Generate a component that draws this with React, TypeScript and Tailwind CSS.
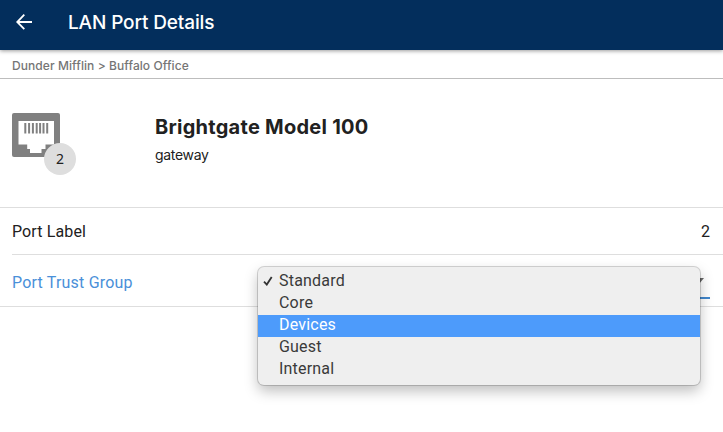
const options = ["Standard", "Core", "Devices", "Guest", "Internal"];

function BackArrow() {
  return (
    <svg className="h-4 w-4" viewBox="0 0 16 16" fill="none" stroke="#fff" strokeWidth="1.8">
      <path d="M8.3 0.7 1.2 8l7.1 7.2M1.2 8H16" />
    </svg>
  );
}

function PortIcon() {
  return (
    <svg className="h-11 w-12" viewBox="0 0 48 44">
      <rect width="48" height="44" rx="2" fill="#808080" />
      <path d="M6.5 8H42v23.5h-8.500v4.500h-4v4H18v-4h-2.800v-4.500H6.500z" fill="#fff" />
      <path
        d="M13.300 10v10.500M17.100 10v10.500M20.900 10v10.500M24.700 10v10.500M28.100 10v10.500M31.500 10v10.500M35.200 10v10.500"
        stroke="#808080"
        strokeWidth="2"
      />
    </svg>
  );
}

function TrustGroupMenu() {
  return (
    <ul className="absolute top-[12px] left-[258px] w-[442px] rounded-[6px] bg-[#efefef] py-1 font-[Roboto,sans-serif] text-[16px] leading-[22px] tracking-[0.2px] text-[#3a3a3a] shadow-[0_0_0_1px_rgba(0,0,0,0.16),0_6px_14px_rgba(0,0,0,0.26)]">
      {options.map((name, i) => (
        <li
          key={name}
          className={`flex h-[22px] items-center pl-[5px] ${name === "Devices" ? "bg-[#4d9bfb] text-white" : ""}`}
        >
          <span className="w-4">
            {i === 0 && (
              <svg className="-mt-0.5 h-[10px] w-[10px]" viewBox="0 0 10 10" fill="none" stroke="#333" strokeWidth="1.8">
                <path d="M1 5.600 3.800 8.600 8.700 1" />
              </svg>
            )}
          </span>
          <span className="-mt-[3px]">{name}</span>
        </li>
      ))}
    </ul>
  );
}

export default function App() {
  return (
    <div className="h-[432px] w-[723px] overflow-hidden bg-white font-[Inter,sans-serif] text-[#212121]">
      <header className="relative flex h-[50px] items-center bg-[#032e5c] pb-[6px] pl-4 text-white shadow-[0_1px_4px_rgba(0,0,0,0.4)]">
        <BackArrow />
        <h1 className="mt-[2px] ml-9 text-[19px] leading-6 font-medium tracking-[-0.13px]">LAN Port Details</h1>
      </header>
      <nav className="flex h-[29px] items-center border-b border-[#bdbdbd] pt-[3px] pl-3 text-[12px] font-medium tracking-[0.08px] text-[#757575]">
        Dunder Mifflin &gt; Buffalo Office
      </nav>
      <section className="flex h-[129px] border-b border-[#dedede] pt-[34px] pl-3">
        <div className="relative h-[62px] w-[143px]">
          <PortIcon />
          <span className="absolute top-[30px] left-8 flex h-8 w-8 items-center justify-center rounded-full bg-[#dedede] pb-[2px] font-['Noto_Sans',sans-serif] text-[14px]">
            2
          </span>
        </div>
        <div>
          <h2 className="text-[20px] leading-7 font-bold tracking-[0.26px]">Brightgate Model 100</h2>
          <p className="mt-1 text-[14px] leading-5 tracking-[-0.3px]">gateway</p>
        </div>
      </section>
      <div className="border-b border-[#dedede] pl-3 font-[Roboto,sans-serif] text-[16px]">
        <div className="flex h-[47px] items-center justify-between border-b border-[#dedede] pt-[2px] pr-[13px]">
          <span className="tracking-[0.12px]">Port Label</span>
          <span>2</span>
        </div>
        <div className="relative -ml-3 flex h-[51px] items-center justify-between pr-[13px] pl-3">
          <span className="mt-[5px] tracking-[0.2px] text-[#4a90d9]">Port Trust Group</span>
          <div className="mb-[7px] flex h-[44px] w-[160px] items-center justify-end self-end border-b-2 border-[#4287cc] pr-[6px]">
            <svg className="mt-[10px] h-[6px] w-[10px]" viewBox="0 0 10 6">
              <path d="M0 0H10L5 6z" fill="#666" />
            </svg>
          </div>
          <TrustGroupMenu />
        </div>
      </div>
    </div>
  );
}
